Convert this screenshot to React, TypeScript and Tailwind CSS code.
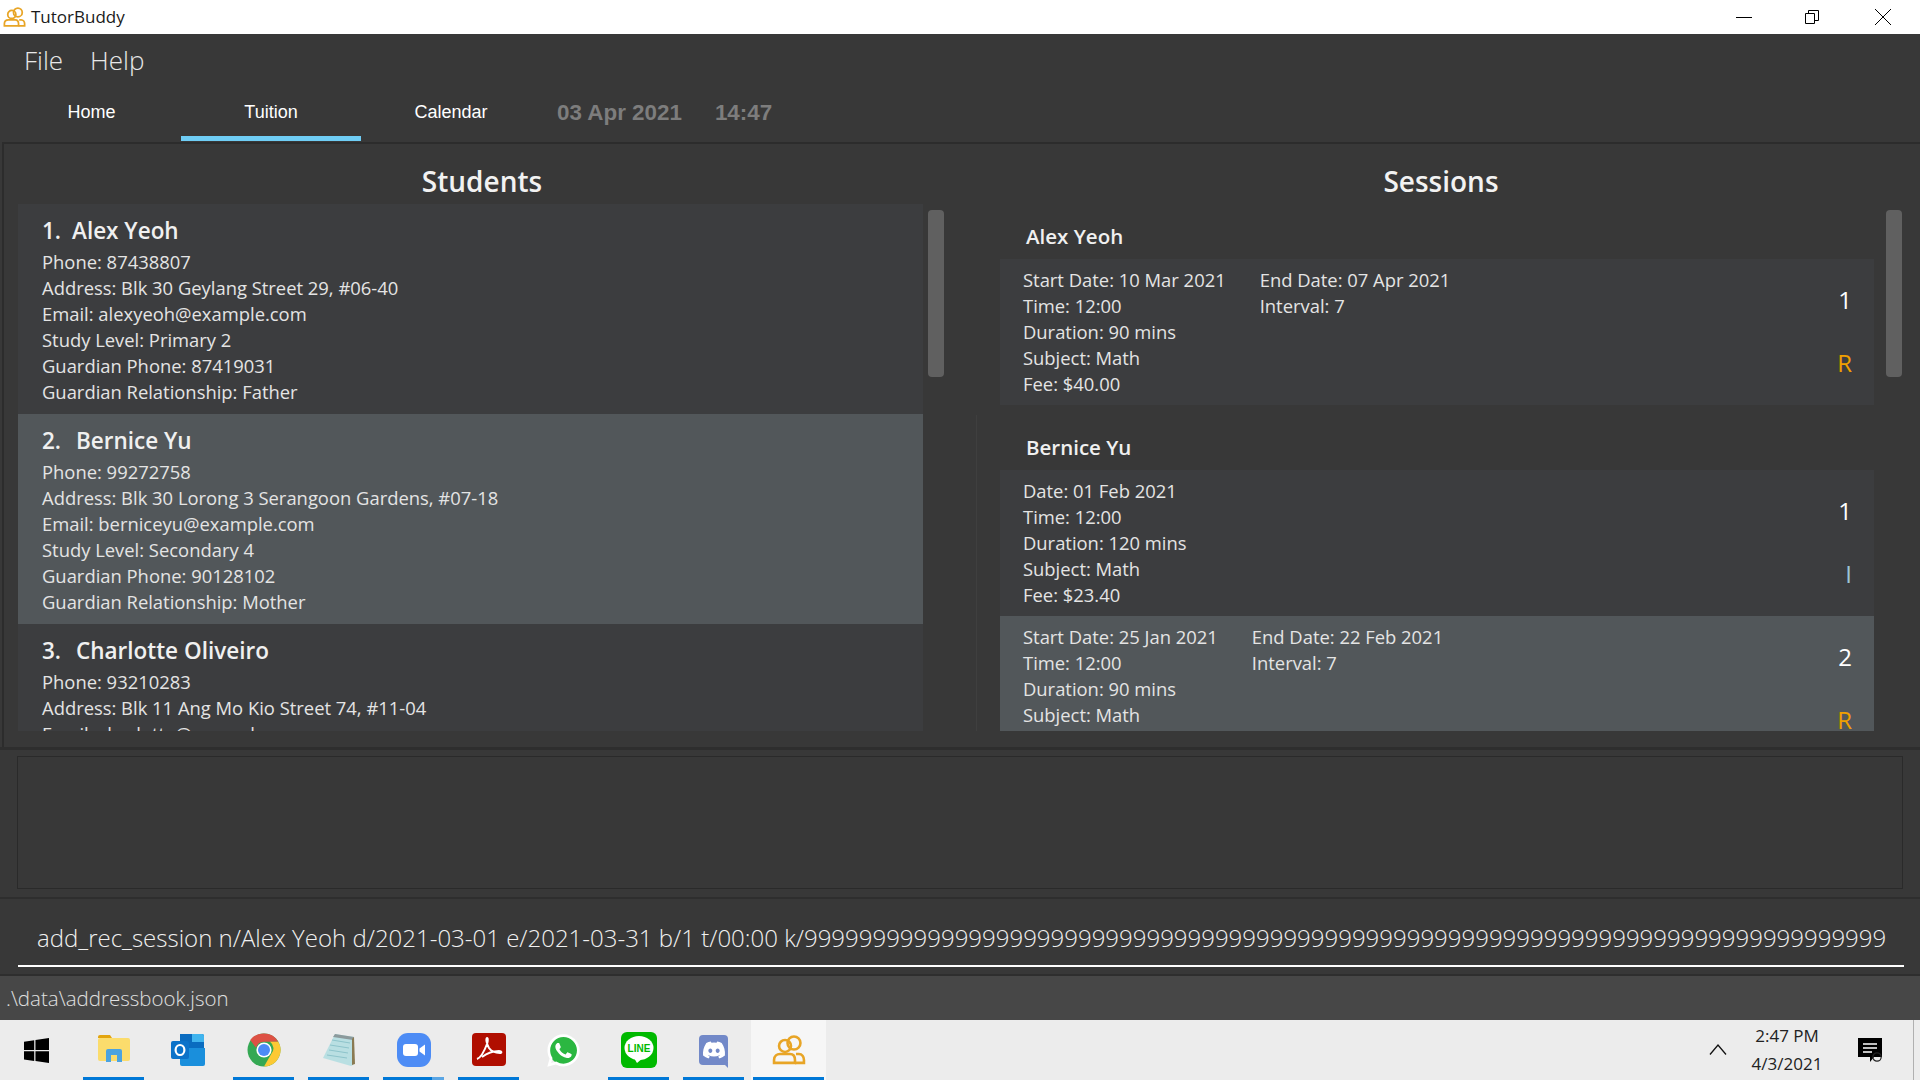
import { FaDiscord, FaWhatsapp } from 'react-icons/fa'

const students = [
  {
    num: '1.',
    name: 'Alex Yeoh',
    lines: ['Phone: 87438807', 'Address: Blk 30 Geylang Street 29, #06-40', 'Email: alexyeoh@example.com', 'Study Level: Primary 2', 'Guardian Phone: 87419031', 'Guardian Relationship: Father'],
  },
  {
    num: '2.',
    name: 'Bernice Yu',
    selected: true,
    lines: ['Phone: 99272758', 'Address: Blk 30 Lorong 3 Serangoon Gardens, #07-18', 'Email: berniceyu@example.com', 'Study Level: Secondary 4', 'Guardian Phone: 90128102', 'Guardian Relationship: Mother'],
  },
  {
    num: '3.',
    name: 'Charlotte Oliveiro',
    lines: ['Phone: 93210283', 'Address: Blk 11 Ang Mo Kio Street 74, #11-04', 'Email: charlotte@example.com'],
  },
]

interface SessionCardProps {
  index: number
  lines: string[]
  extra?: string[]
  type: 'R' | 'I'
  selected?: boolean
}

function SessionCard({ index, lines, extra, type, selected }: SessionCardProps) {
  return (
    <div className={`flex justify-between h-[146px] pl-[23px] pr-[22px] pt-[8px] ${selected ? 'bg-[#52575a]' : 'bg-[#3c3d3f]'}`}>
      <div className="flex gap-[34px] text-[18.4px] leading-[26px] text-[#e4e4e4]">
        <div>
          {lines.map((l) => (
            <div key={l}>{l}</div>
          ))}
        </div>
        {extra && (
          <div>
            {extra.map((l) => (
              <div key={l}>{l}</div>
            ))}
          </div>
        )}
      </div>
      <div className="flex flex-col items-end pt-[18px] text-[24px] leading-[30px]">
        <div className="font-medium text-white">{index}</div>
        <div className={`mt-[33px] font-medium ${type === 'R' ? 'text-[#f0a000]' : 'text-[#9cc6d6]'}`}>{type}</div>
      </div>
    </div>
  )
}

function SessionHeading({ name }: { name: string }) {
  return <div className="h-[55px] pl-[50px] pt-[14px] text-[20.5px] leading-[36px] font-semibold text-[#f0f0f0]">{name}</div>
}

function Scrollbar() {
  return <div className="mt-[6px] h-[167px] w-[16px] rounded-[4px] bg-[#606060]" />
}

function TutorIcon({ width }: { width: number }) {
  return (
    <svg width={width} height={width * 0.88} viewBox="0 0 34 30" fill="none" stroke="#e8a526" strokeWidth="2.6">
      <circle cx="22" cy="8" r="6.5" />
      <circle cx="13" cy="11" r="6" />
      <path d="M2 28v-3c0-4 3-6 6-6h10c3 0 5 2 5 6v3z" />
      <path d="M23 28h9v-3c0-3-2-6-5-6h-3" />
    </svg>
  )
}

function TaskItem({ active, focused, split, children }: { active?: boolean; focused?: boolean; split?: boolean; children: React.ReactNode }) {
  return (
    <div className={`relative flex h-[60px] w-[75px] items-center justify-center ${focused ? 'bg-[#f6f6f6]' : ''}`}>
      {children}
      {active && (
        <div className={`absolute bottom-0 h-[3px] ${focused ? 'inset-x-[2px]' : 'inset-x-[7px]'} ${split ? 'bg-gradient-to-r from-[#0078d7] from-80% to-[#5aa5e4] to-80%' : 'bg-[#0078d7]'}`} />
      )}
    </div>
  )
}

export default function App() {
  return (
    <div className="flex h-[1080px] w-[1920px] flex-col overflow-hidden bg-[#383838] font-['Open_Sans',sans-serif]">
      {/* Title bar */}
      <div className="flex h-[34px] shrink-0 items-center bg-white text-[#1a1a1a]">
        <div className="ml-[3px] mr-[5px]">
          <TutorIcon width={23} />
        </div>
        <span className="flex-1 text-[17px]">TutorBuddy</span>
        <svg width="16" height="16" viewBox="0 0 16 16" className="mr-[52px]" stroke="#000" fill="none">
          <path d="M0 8.5h16" />
        </svg>
        <svg width="16" height="16" viewBox="0 0 16 16" className="mr-[54px]" stroke="#000" fill="none">
          <path d="M1.5 4.5h9v10h-9zM4.5 4.5v-3h10v10h-4" />
        </svg>
        <svg width="18" height="18" viewBox="0 0 18 18" className="mr-[28px]" stroke="#000" fill="none">
          <path d="M1 1l16 16M17 1L1 17" />
        </svg>
      </div>

      {/* Menu */}
      <div className="flex h-[54px] shrink-0 items-center gap-[27px] pb-[2px] pl-[24px] text-[26px] font-light text-[#e8e8e8]">
        <span>File</span>
        <span>Help</span>
      </div>

      {/* Tabs */}
      <div className="flex h-[54px] shrink-0 items-start font-['Liberation_Sans',sans-serif]">
        <div className="flex h-[53px] w-[181px] items-center justify-center pb-[4px] pl-[2px] text-[18px] text-white">Home</div>
        <div className="flex h-[53px] w-[180px] items-center justify-center border-b-[5px] border-[#6fcdf5] pt-[1px] text-[18px] text-white">Tuition</div>
        <div className="flex h-[53px] w-[180px] items-center justify-center pb-[4px] text-[18px] text-white">Calendar</div>
        <div className="ml-[16px] flex h-[53px] items-center gap-[33px] pb-[3px] text-[22.4px] font-bold text-[#7d7d7d]">
          <span>03 Apr 2021</span>
          <span>14:47</span>
        </div>
      </div>

      {/* Students and sessions */}
      <div className="ml-[2px] flex h-[605px] shrink-0 border-l-2 border-t-2 border-[#2c2c2c]">
        <div className="w-[958px] shrink-0 pl-[14px]">
          <div className="flex h-[60px] w-[928px] items-center justify-center pt-[13px] text-[28px] font-semibold text-[#f2f2f2]">Students</div>
          <div className="flex gap-[5px]">
            <div className="h-[527px] w-[905px] overflow-hidden">
              {students.map((s) => (
                <div key={s.name} className={`h-[210px] pl-[24px] pt-[9px] ${s.selected ? 'bg-[#52575a]' : 'bg-[#3c3d3f]'}`}>
                  <div className="flex text-[22.5px] font-semibold leading-[36px] text-[#f0f0f0]">
                    <span className={s.num === '1.' ? 'w-[30px]' : 'w-[34px]'}>{s.num}</span>
                    <span>{s.name}</span>
                  </div>
                  <div className="text-[18.4px] leading-[26px] text-[#e4e4e4]">
                    {s.lines.map((l) => (
                      <div key={l}>{l}</div>
                    ))}
                  </div>
                </div>
              ))}
            </div>
            <Scrollbar />
          </div>
        </div>
        <div className="w-[958px] shrink-0 pl-[14px]">
          <div className="flex h-[60px] items-center justify-center pr-[14px] pt-[13px] text-[28px] font-semibold text-[#f2f2f2]">Sessions</div>
          <div className="flex gap-[12px]">
            <div className="h-[527px] w-[898px] overflow-hidden">
              <div className="h-[211px] pl-[24px]">
                <div className="-ml-[24px]">
                  <SessionHeading name="Alex Yeoh" />
                </div>
                <SessionCard
                  index={1}
                  type="R"
                  lines={['Start Date: 10 Mar 2021', 'Time: 12:00', 'Duration: 90 mins', 'Subject: Math', 'Fee: $40.00']}
                  extra={['End Date: 07 Apr 2021', 'Interval: 7']}
                />
              </div>
              <div className="border-l border-[#3f3f3f] pl-[23px]">
                <div className="-ml-[24px]">
                  <SessionHeading name="Bernice Yu" />
                </div>
                <SessionCard
                  index={1}
                  type="I"
                  lines={['Date: 01 Feb 2021', 'Time: 12:00', 'Duration: 120 mins', 'Subject: Math', 'Fee: $23.40']}
                />
                <SessionCard
                  index={2}
                  type="R"
                  selected
                  lines={['Start Date: 25 Jan 2021', 'Time: 12:00', 'Duration: 90 mins', 'Subject: Math', 'Fee: $40.00']}
                  extra={['End Date: 22 Feb 2021', 'Interval: 7']}
                />
              </div>
            </div>
            <Scrollbar />
          </div>
        </div>
      </div>

      {/* Result display */}
      <div className="h-[150px] shrink-0 border-t-[3px] border-[#2e2e2e] px-[14px] pt-[6px]">
        <div className="ml-[3px] h-[133px] w-[1886px] border border-[#2a2a2a]" />
      </div>

      {/* Command box */}
      <div className="h-[79px] shrink-0 border-y-2 border-[#2e2e2e] pl-[18px] pr-[16px] pt-[24px]">
        <div className="h-[44px] overflow-hidden whitespace-nowrap border-b-2 border-white pl-[19px] text-[24px] font-light leading-[30px] text-[#f0f0f0]">
          add_rec_session n/Alex Yeoh d/2021-03-01 e/2021-03-31 b/1 t/00:00 k/9999999999999999999999999999999999999999999999999999999999999999999999999999999
        </div>
      </div>

      {/* Status bar */}
      <div className="flex h-[44px] shrink-0 items-center bg-[#474747] pl-[6px] text-[20.5px] font-light text-[#e0e0e0]">.\data\addressbook.json</div>

      {/* Taskbar */}
      <div className="relative flex h-[60px] shrink-0 items-center bg-[#ececec] pl-[1px]">
        <TaskItem>
          <svg width="25" height="25" viewBox="0 0 24 24" fill="#000" className="mr-[4px]">
            <path d="M0 3.5l9.8-1.4v9.4H0zM11 1.9L24 0v11.5H11zM0 12.7h9.8v9.3L0 20.6zM11 12.7h13V24l-13-1.9z" />
          </svg>
        </TaskItem>
        <TaskItem active>
          <svg width="34" height="32" viewBox="0 0 34 32">
            <path d="M1 3a2 2 0 012-2h10l2 3H1z" fill="#e3a50e" />
            <rect x="1" y="4" width="32" height="23" rx="2" fill="#fbdc6c" />
            <path d="M9 28V17a2 2 0 012-2h12a2 2 0 012 2v11h-5v-7h-6v7z" fill="#4ba3e0" />
          </svg>
        </TaskItem>
        <TaskItem>
          <svg width="38" height="34" viewBox="0 0 38 34">
            <path d="M10 1h22a2 2 0 012 2v14H10z" fill="#0a6cc0" />
            <path d="M22 1h10a2 2 0 012 2v6H22z" fill="#40b4ee" />
            <path d="M10 15l25 0v16a2 2 0 01-2 2H12a2 2 0 01-2-2z" fill="#1a8fdc" />
            <rect x="1" y="8" width="18" height="18" rx="2" fill="#0b72c9" />
            <ellipse cx="10" cy="17" rx="4.4" ry="5" fill="none" stroke="#fff" strokeWidth="2.2" />
          </svg>
        </TaskItem>
        <TaskItem active>
          <svg width="34" height="34" viewBox="0 0 34 34">
            <circle cx="17" cy="17" r="16.5" fill="#34a853" />
            <path d="M17 .5a16.5 16.5 0 0114.3 8.2H17a8.3 8.3 0 00-8 6.1L3.2 6.9A16.5 16.5 0 0117 .5z" fill="#dd5144" />
            <path d="M31.3 8.7A16.5 16.5 0 0117 33.5l7.2-12.4A8.3 8.3 0 0023 8.7z" fill="#fcc934" />
            <circle cx="17" cy="17" r="7.6" fill="#fff" />
            <circle cx="17" cy="17" r="6" fill="#4c8bf5" />
          </svg>
        </TaskItem>
        <TaskItem active>
          <svg width="34" height="34" viewBox="0 0 34 34">
            <path d="M13 1l19 3-1 28-2 1-28-8z" fill="#b9dfe2" />
            <path d="M13 1l19 3-1 3-20-3z" fill="#8c9a9c" />
            <path d="M32 4l1 27-3 1 0-26z" fill="#8a7a52" />
            <path d="M10 7l18 3M8 12l19 3M7 17l19 3M5 22l20 3" stroke="#8ec4cb" strokeWidth="1" />
          </svg>
        </TaskItem>
        <TaskItem active split>
          <svg width="34" height="34" viewBox="0 0 34 34">
            <rect x="0" y="0" width="34" height="34" rx="11" fill="#4d8cf5" />
            <rect x="6" y="11" width="15" height="12" rx="3" fill="#fff" />
            <path d="M22.5 15.5l5.5-4v11l-5.5-4z" fill="#fff" />
          </svg>
        </TaskItem>
        <TaskItem active>
          <svg width="34" height="34" viewBox="0 0 34 34">
            <rect width="34" height="33" rx="4" fill="#b00e00" />
            <path d="M5 26c3-1 7-7 10-15 1-3 1-6 0-6s-1 5 2 10c2 3 6 5 11 5 2 0 2-2-1-2-6 0-13 3-17 6" fill="none" stroke="#fff" strokeWidth="2" />
          </svg>
        </TaskItem>
        <TaskItem>
          <div className="relative flex h-[30px] w-[30px] items-center justify-center rounded-full bg-[#2bb741]">
            <FaWhatsapp className="absolute text-[37px] text-white" />
          </div>
        </TaskItem>
        <TaskItem active>
          <svg width="36" height="36" viewBox="0 0 36 36">
            <rect width="36" height="36" rx="6" fill="#00b900" />
            <ellipse cx="18" cy="16" rx="14.5" ry="12" fill="#fff" />
            <path d="M13 26l3 5 6-5z" fill="#fff" />
            <text x="18" y="20" textAnchor="middle" fontFamily="Liberation Sans" fontWeight="700" fontSize="10" fill="#00b900">LINE</text>
          </svg>
        </TaskItem>
        <TaskItem active>
          <div className="relative flex h-[30px] w-[29px] items-center justify-center rounded-[4px] bg-[#7289c8]">
            <FaDiscord className="text-[24px] text-white" />
            <div className="absolute -bottom-[3px] right-0 h-0 w-0 border-l-[6px] border-t-[6px] border-l-transparent border-t-[#7289c8]" />
          </div>
        </TaskItem>
        <TaskItem active focused>
          <TutorIcon width={34} />
        </TaskItem>

        <div className="ml-auto flex items-center">
          <svg width="18" height="11" viewBox="0 0 18 11" stroke="#111" fill="none" strokeWidth="1.3" className="mr-[20px] mt-[-2px]">
            <path d="M1 10.5L9 1l8 9.5" />
          </svg>
          <div className="w-[80px] text-center text-[17px] leading-[28px] text-[#222]">
            <div>2:47 PM</div>
            <div>4/3/2021</div>
          </div>
          <div className="relative ml-[31px] mr-[38px] h-[24px] w-[24px]">
            <svg width="24" height="24" viewBox="0 0 24 24">
              <path d="M0 0h24v19h-8l-4 5v-5H0z" fill="#000" />
              <path d="M5 6h14M5 10h14M5 14h9" stroke="#fff" strokeWidth="1.4" />
              <circle cx="19" cy="19" r="4.2" fill="none" stroke="#222" strokeWidth="1.2" />
            </svg>
          </div>
          <div className="absolute bottom-0 right-[6px] top-0 w-px bg-[#b0b0b0]" />
        </div>
      </div>
    </div>
  )
}
